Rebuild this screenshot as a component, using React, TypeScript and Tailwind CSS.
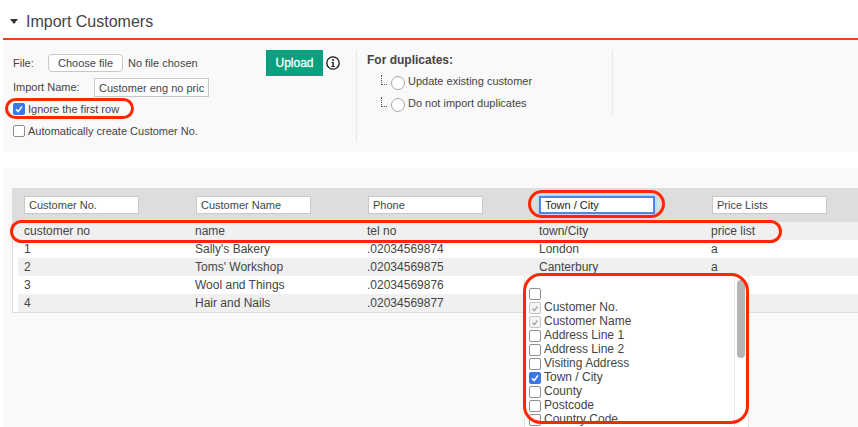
const columns = ['Customer No.', 'Customer Name', 'Phone', 'Town / City', 'Price Lists'];
const headers = ['customer no', 'name', 'tel no', 'town/City', 'price list'];
const rows = [
  ['1', "Sally's Bakery", '.02034569874', 'London', 'a'],
  ['2', "Toms' Workshop", '.02034569875', 'Canterbury', 'a'],
  ['3', 'Wool and Things', '.02034569876', '', ''],
  ['4', 'Hair and Nails', '.02034569877', '', ''],
];
const options = [
  { label: '', state: 'off' },
  { label: 'Customer No.', state: 'locked' },
  { label: 'Customer Name', state: 'locked' },
  { label: 'Address Line 1', state: 'off' },
  { label: 'Address Line 2', state: 'off' },
  { label: 'Visiting Address', state: 'off' },
  { label: 'Town / City', state: 'on' },
  { label: 'County', state: 'off' },
  { label: 'Postcode', state: 'off' },
  { label: 'Country Code', state: 'off' },
];

function Check({ state }: { state: string }) {
  if (state === 'on') {
    return (
      <span className="w-[12px] h-[12px] rounded-[2px] bg-[#3b78e7] flex items-center justify-center shrink-0">
        <svg viewBox="0 0 12 12" className="w-[12px] h-[12px]"><path d="M3 6.3 5.2 8.6 9 3.4" fill="none" stroke="#fff" strokeWidth="1.6" /></svg>
      </span>
    );
  }
  if (state === 'locked') {
    return (
      <span className="w-[12px] h-[12px] rounded-[2px] border border-[#c4c4c4] bg-[#f4f4f4] flex items-center justify-center shrink-0">
        <svg viewBox="0 0 12 12" className="w-[11px] h-[11px]"><path d="M3 6.3 5.2 8.6 9 3.4" fill="none" stroke="#999" strokeWidth="1.4" /></svg>
      </span>
    );
  }
  return <span className="w-[12px] h-[12px] rounded-[2px] border border-[#8f8f8f] bg-white shrink-0" />;
}

function Radio() {
  return <span className="w-[14px] h-[14px] rounded-full border border-[#a8a8a8] bg-white shrink-0 mt-[4px]" />;
}

function TreeLine() {
  return <span className="w-[6px] h-[10px] border-l border-b border-dotted border-[#555] shrink-0 ml-[14px] mr-[4px] -mt-[3px]" />;
}

function InfoIcon() {
  return (
    <svg viewBox="0 0 14 14" className="w-[14px] h-[14px] mt-[6px] shrink-0">
      <circle cx="7" cy="7" r="6.2" fill="#fff" stroke="#111" strokeWidth="1.3" />
      <circle cx="7" cy="3.9" r="1" fill="#111" />
      <path d="M5.6 5.9H7.7V9.9H8.8V10.9H5.4V9.9H6.4V6.9H5.6Z" fill="#111" />
    </svg>
  );
}

export default function App() {
  return (
    <div className="relative w-[858px] h-[427px] overflow-hidden bg-white font-['Liberation_Sans',Arial,sans-serif] text-[12px] text-[#444]">
      <div className="h-[38px] ml-[3px] flex items-center pl-[7px] pt-[5px]">
        <span className="w-0 h-0 border-x-[4px] border-x-transparent border-t-[5px] border-t-[#333]" />
        <h1 className="ml-[8px] text-[16px] text-[#444]">Import Customers</h1>
      </div>

      {/* Import form */}
      <div className="ml-[3px] border-t-2 border-[#f4440e] bg-[#f9f9f9] h-[114px] flex">
        <div className="w-[260px] pl-[10px] pt-[14px]">
          <div className="flex items-center h-[18px]">
            <span className="w-[35px] text-[11px]">File:</span>
            <span className="w-[75px] h-[18px] border border-[#c8c8c8] rounded-[4px] bg-white flex items-center justify-center text-[11px]">Choose file</span>
            <span className="ml-[5px] text-[11px]">No file chosen</span>
          </div>
          <div className="flex items-center mt-[6px] h-[19px]">
            <span className="w-[81px] text-[11px]">Import Name:</span>
            <span className="w-[115px] h-[19px] border border-[#c8c8c8] bg-white pl-[4px] text-[11px] leading-[18px] whitespace-nowrap overflow-hidden">Customer eng no pric</span>
          </div>
          <div className="flex items-center gap-[3px] mt-[3px] h-[18px]">
            <Check state="on" />
            <span className="text-[11px]">Ignore the first row</span>
          </div>
          <div className="flex items-center gap-[3px] mt-[4px] h-[18px]">
            <Check state="off" />
            <span className="text-[11px]">Automatically create Customer No.</span>
          </div>
        </div>
        <div className="w-[93px] pt-[10px] pl-[3px] flex items-start gap-[3px]">
          <span className="w-[57px] h-[26px] bg-[#06a17e] text-white text-[12px] flex items-center justify-center [-webkit-text-stroke:0.3px_white]">Upload</span>
          <InfoIcon />
        </div>
        <div className="w-[257px] h-[92px] mt-[10px] border-l border-[#e8e8e8] flex-none">
          <div className="h-[65px] border-r border-[#e8e8e8] pl-[10px] pt-[1px]">
            <div className="text-[12px] font-bold leading-[18px]">For duplicates:</div>
            <div className="flex items-center h-[22px] mt-[1px] text-[11px]"><TreeLine /><Radio /><span className="ml-[3px]">Update existing customer</span></div>
            <div className="flex items-center h-[22px] text-[11px]"><TreeLine /><Radio /><span className="ml-[3px]">Do not import duplicates</span></div>
          </div>
        </div>
      </div>

      {/* Mapping table */}
      <div className="ml-[3px] mt-[16px] h-[259px] bg-[#f9f9f9] pt-[20px] pl-[9px]">
        <div className="h-[125px] bg-white border-l border-b border-[#dcdcdc]">
          <div className="h-[34px] bg-[#dddddd] flex items-center pl-[11px]">
            {columns.map((c, i) => (
              <div key={c} className="w-[172px] shrink-0">
                <div className={i === 3 ? 'w-[116px] -ml-px h-[18px] border-2 border-[#4a86e8] bg-white pl-[4px] text-[11px] leading-[14px] text-[#222] outline-2 outline-[#c5d7f5]' : 'w-[115px] h-[18px] border border-[#c8c8c8] bg-white pl-[4px] text-[11px] leading-[16px]'}>{c}</div>
              </div>
            ))}
          </div>
          <div className="h-[18px] bg-[#f0f0f0] flex items-center pl-[11px]">
            {headers.map((h, i) => (
              <div key={h} className={i === 0 ? 'w-[171px] shrink-0 text-[12px]' : 'w-[172px] shrink-0 text-[12px]'}>{h}</div>
            ))}
          </div>
          <div className="ml-[5px]">
            {rows.map((r, i) => (
              <div key={r[0]} className={i % 2 ? 'h-[18px] bg-[#f0f0f0] flex items-center pl-[6px]' : 'h-[18px] bg-white flex items-center pl-[6px]'}>
                {r.map((v, j) => (
                  <div key={j} className={j === 0 ? 'w-[171px] shrink-0 text-[12px]' : 'w-[172px] shrink-0 text-[12px]'}>{v}</div>
                ))}
              </div>
            ))}
          </div>
        </div>
      </div>

      {/* Column picker dropdown */}
      <div className="absolute left-[524px] top-[276px] w-[225px] h-[151px] bg-white border-l border-r border-[#e5e5e5] overflow-hidden pt-[11px] pl-[4px]">
        {options.map((o) => (
          <div key={o.label} className="h-[14px] flex items-center gap-[3px] text-[12px] whitespace-nowrap">
            <Check state={o.state} />
            <span className="-mt-[2px]">{o.label}</span>
          </div>
        ))}
        <div className="absolute right-0 top-0 bottom-0 w-[14px] border-l border-[#e8e8e8]">
          <div className="absolute left-[2px] top-[4px] w-[8px] h-[78px] rounded-full bg-[#b5b5b5]" />
        </div>
      </div>

      {/* Red annotations */}
      <div className="absolute left-[5px] top-[98px] w-[129px] h-[21px] rounded-full border-[3px] border-[#ff2600]" />
      <div className="absolute left-[10px] top-[220px] w-[772px] h-[23px] rounded-[12px] border-[3px] border-[#ff2600]" />
      <div className="absolute left-[528px] top-[190px] w-[137px] h-[28px] rounded-[14px] border-[3px] border-[#ff2600]" />
      <div className="absolute left-[523px] top-[273px] w-[226px] h-[151px] rounded-[18px] border-[3px] border-[#ff2600]" />
    </div>
  );
}
